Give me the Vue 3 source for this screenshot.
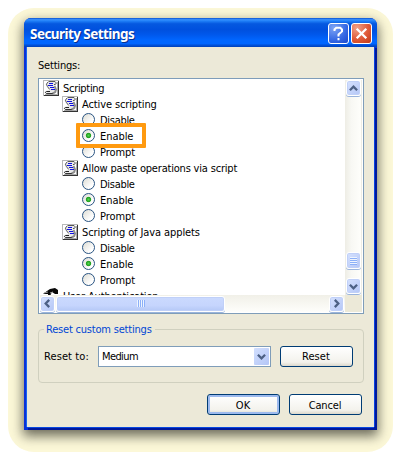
<script setup>
const options = ['Disable', 'Enable', 'Prompt']
const groups = [
  { name: 'Active scripting', cls: 'g1' },
  { name: 'Allow paste operations via script', cls: 'g2' },
  { name: 'Scripting of Java applets', cls: 'g3' },
]
</script>

<template>
  <div class="page">
    <svg class="defs" width="0" height="0">
      <symbol id="script" viewBox="0 0 16 16" shape-rendering="crispEdges">
        <rect width="16" height="16" fill="#fff" />
        <path d="M0 .5H16M.5 0V16" stroke="#b8b8b8" />
        <path d="M1 15.5H16M15.5 1V16" stroke="#333" />
        <path d="M2 14.5H15M14.5 2V15" stroke="#aaa" />
        <g shape-rendering="auto" fill="none">
          <path d="M5 2H12.5L13.5 4L11 6L13 10L10.5 13.5H3.5L2.5 11L6.5 9.5L3.5 5Z" fill="#e8e8e8" />
          <path d="M11.5 6L13 9.5L12.2 12L9.5 13.6" stroke="#8c8c8c" stroke-width="2" />
          <path d="M5.5 1.5H12L13.4 3L12.3 4.5H11M5 2L3.4 4.2L4.4 6.5L6.6 9.4" stroke="#444" stroke-width=".9" />
          <path d="M7 11.5H3.5L2.3 12.4L3.5 13.6H9.8" stroke="#222" />
        </g>
        <path d="M6 3.5H10M5 5.5H10M7 7.5H11M8 9.5H12" stroke="#1010e0" />
      </symbol>
      <symbol id="arrow" viewBox="0 0 9 9">
        <path d="M.9 6.2L4.5 2.7L8.1 6.2" fill="none" stroke="#4d6185" stroke-width="2.3" />
      </symbol>
    </svg>

    <div class="halo">
      <div class="window">
        <header class="titlebar">
          <span class="title">Security Settings</span>
          <button class="cap help">
            <svg width="21" height="21" viewBox="0 0 21 21"><path d="M6.5 8V6.4L8.2 4.8H12.3L14 6.4V8.4L10.5 11.5V13.5M10.5 15V17.3" fill="none" stroke="#fff" stroke-width="2" /></svg>
          </button>
          <button class="cap close">
            <svg width="21" height="21" viewBox="0 0 21 21"><path d="M5.7 5.7L15.3 15.3M15.3 5.7L5.7 15.3" stroke="#fff" stroke-width="2.3" /></svg>
          </button>
        </header>

        <main class="client">
          <div class="label"><span class="t-settings">Settings:</span></div>
          <section class="listbox">
            <div class="tree">
              <div class="row l0"><svg class="ico"><use href="#script" /></svg><span class="t-scripting">Scripting</span></div>
              <template v-for="g in groups" :key="g.name">
                <div class="row l1"><svg class="ico"><use href="#script" /></svg><span :class="g.cls">{{ g.name }}</span></div>
                <div v-for="o in options" :key="o" class="row l2">
                  <i class="radio" :class="{ on: o === 'Enable' }"></i><span :class="o.toLowerCase()">{{ o }}</span>
                </div>
              </template>
              <div class="row l0">
                <svg class="ico" viewBox="0 0 16 16">
                  <path d="M0 6L4 3L7 1L12 0L15 2V6H12L9 4L7 8H5V6Z" fill="#080808" />
                  <path d="M1 5L5 4M7 5L10 4" stroke="#a0a0a0" />
                </svg>
                <span class="t-auth">User Authentication</span>
              </div>
              <div class="mark"></div>
            </div>
            <div class="vbar">
              <button class="sb"><svg width="9" height="9"><use href="#arrow" /></svg></button>
              <div class="vspace"></div>
              <div class="sb vthumb"><i></i></div>
              <div class="vgap"></div>
              <button class="sb"><svg class="down" width="9" height="9"><use href="#arrow" /></svg></button>
            </div>
            <div class="hbar">
              <button class="sb"><svg class="left" width="9" height="9"><use href="#arrow" /></svg></button>
              <div class="sb hthumb"><i></i></div>
              <button class="sb end"><svg class="right" width="9" height="9"><use href="#arrow" /></svg></button>
            </div>
            <div class="corner"></div>
          </section>

          <section class="group">
            <span class="legend"><span class="t-legend">Reset custom settings</span></span>
            <span class="resetto"><span class="t-reset">Reset to:</span></span>
            <div class="combo">
              <span class="t-medium">Medium</span>
              <button class="drop"><svg class="down" width="9" height="9"><use href="#arrow" /></svg></button>
            </div>
            <button class="btn"><span class="t-rbtn">Reset</span></button>
          </section>

          <footer class="actions">
            <button class="btn default"><span>OK</span></button>
            <button class="btn"><span class="t-cancel">Cancel</span></button>
          </footer>
        </main>
      </div>
    </div>
  </div>
</template>

<style>
body { margin: 0; background: #fff; }
</style>

<style scoped>
* { box-sizing: border-box; }
.page {
  width: 401px; height: 460px; padding: 8px; overflow: hidden;
  font: 11px/16px "DejaVu Sans Condensed", "DejaVu Sans", sans-serif;
  font-stretch: condensed; color: #000; white-space: nowrap;
}
.defs { position: absolute; }
button { font: inherit; color: inherit; padding: 0; margin: 0; border: 0; display: flex; align-items: center; justify-content: center; }
.halo { width: 385px; height: 444px; padding: 10px 16px; background: #fcf8d8; border-radius: 26px; overflow: hidden; }
.window {
  width: 353px; height: 412px; border-radius: 7px 7px 0 0; background: #0831d9;
  display: flex; flex-direction: column; overflow: hidden;
  box-shadow: 0 5px 12px 1px rgba(60, 60, 50, .75);
}
.titlebar {
  height: 29px; flex: none; display: flex; align-items: center; gap: 2px; padding: 1px 5px 0 6px;
  background: linear-gradient(#0a50d0 0, #3a93ff 6%, #2080f8 10%, #0558e0 20%, #0050de 40%, #0058ec 58%, #0066ff 76%, #0066ff 88%, #0050d8 94%, #0040b8 100%);
}
.title {
  flex: 1; color: #fff; font: bold 13.5px/20px "Noto Sans", sans-serif; letter-spacing: -.56px;
  text-shadow: 1px 1px #08308c; padding-top: 1px;
}
.cap { width: 21px; height: 21px; border: 1px solid #fff; border-radius: 3px; overflow: hidden; }
.cap svg { flex: none; }
.help { background: radial-gradient(circle at 25% 20%, #7da4f4, #3568e4 60%, #1a48cc); }
.close { background: radial-gradient(circle at 25% 20%, #f0a088, #e05a38 55%, #c03a18); }
.client {
  flex: 1; margin: 0 3px 3px; padding: 11px 10px 0 11px; background: #ece9d8;
  display: flex; flex-direction: column;
  box-shadow: -1px 0 #1664f0, 1px 0 #0840e0, 0 1px #0848e0, 2px 2px 0 1px #00189c;
}
.label { height: 20px; flex: none; }
.t-settings { letter-spacing: -.2px; }
.listbox {
  width: 326px; height: 236px; flex: none; border: 1px solid #7f9db9; background: #fff; padding: 1px;
  display: grid; grid-template: 215px 17px / 305px 17px; 
}
.tree { position: relative; overflow: hidden; }
.row { height: 16px; display: flex; align-items: center; gap: 4px; }
.row span { padding-top: 2px; }
.t-scripting { letter-spacing: -.3px; }
.g1 { letter-spacing: -.12px; }
.g2 { letter-spacing: -.19px; }
.g3 { letter-spacing: -.1px; }
.disable { letter-spacing: -.3px; }
.enable, .prompt { letter-spacing: -.05px; }
.t-auth { letter-spacing: -.15px; }
.t-legend { letter-spacing: -.2px; }
.t-reset { letter-spacing: .1px; padding-top: 1px; }
.t-medium { letter-spacing: -.6px; padding-top: 1px; }
.t-rbtn { letter-spacing: .1px; }
.t-cancel { letter-spacing: -.15px; }
.l0 { padding-left: 3px; }
.l1 { padding-left: 22px; }
.l2 { padding-left: 42px; gap: 5px; }
.ico { width: 16px; height: 16px; flex: none; }
.radio {
  width: 13px; height: 13px; border: 1px solid #2a5482; border-radius: 50%; flex: none; margin-bottom: 1px;
  background: linear-gradient(135deg, #dcdcd4, #fff 75%);
}
.on { background: radial-gradient(circle at 5.5px 5.5px, #55d551 0, #21a121 2.2px, rgba(33, 161, 33, 0) 3.1px), linear-gradient(135deg, #dcdcd4, #fff 75%); }
.mark { position: absolute; left: 36px; top: 43px; width: 70px; height: 25px; border: 4px solid #ff9a10; border-radius: 1px; }
.vbar { background: linear-gradient(90deg, #eeede5, #f8f8f4 40%, #fefefb); display: flex; flex-direction: column; align-items: center; border-right: 1px solid #eeede5; }
.hbar { background: linear-gradient(#f1f0e8, #fefefb); display: flex; align-items: center; }
.corner { background: #ece9d8; }
.sb {
  width: 15px; height: 16px; flex: none; border: 1px solid #fff; border-radius: 3px;
  background: linear-gradient(135deg, #d6e2fe, #b4c6f6); box-shadow: inset 0 0 0 1px #c0d0f8, 0 1px #9ab4dc;
  display: flex; align-items: center; justify-content: center;
}
.vspace { height: 156px; }
.vthumb { height: 17px; }
.vthumb i { width: 7px; height: 8px; background: repeating-linear-gradient(#eef4fe 0 1px, #8cb0f8 1px 2px); }
.vgap { height: 9px; }
.down { transform: rotate(180deg); }
.left { transform: rotate(-90deg); }
.right { transform: rotate(90deg); }
.hthumb { width: 169px; margin-left: 1px; background: linear-gradient(#cbdafe, #c6d5fd 60%, #b4c8f6); }
.hthumb i { width: 8px; height: 7px; background: repeating-linear-gradient(90deg, #eef4fe 0 1px, #8cb0f8 1px 2px); }
.hbar .sb.end { margin-left: auto; margin-right: 1px; }
.group {
  width: 326px; height: 54px; margin-top: 15px; flex: none; position: relative;
  border: 1px solid #d0d0bf; border-radius: 4px; display: flex; align-items: center; padding: 0 10px 0 5px;
}
.legend { position: absolute; left: 5px; top: -8px; padding: 0 3px 0 2px; background: #ece9d8; color: #0046d5; }
.resetto { width: 54px; padding-top: 1px; }
.combo { width: 173px; height: 21px; border: 1px solid #7f9db9; background: #fff; display: flex; align-items: center; justify-content: space-between; padding: 0 1px 0 3px; margin-top: 1px; }
.drop { width: 15px; height: 17px; border-radius: 1px; background: linear-gradient(135deg, #d2dffe, #b4c6f6); }
.btn {
  width: 73px; height: 21px; flex: none; border: 1px solid #003c74; border-radius: 3px;
  background: linear-gradient(#fff, #f3f2ec 80%, #dcd8cc); line-height: 19px;
}
.btn span { padding: 1px 1px 0 0; }
.group .btn { margin-left: auto; }
.default { box-shadow: inset 0 0 0 2px #9dbaee; }
.actions { display: flex; justify-content: flex-end; gap: 9px; margin-top: 11px; padding-right: 2px; }
</style>
